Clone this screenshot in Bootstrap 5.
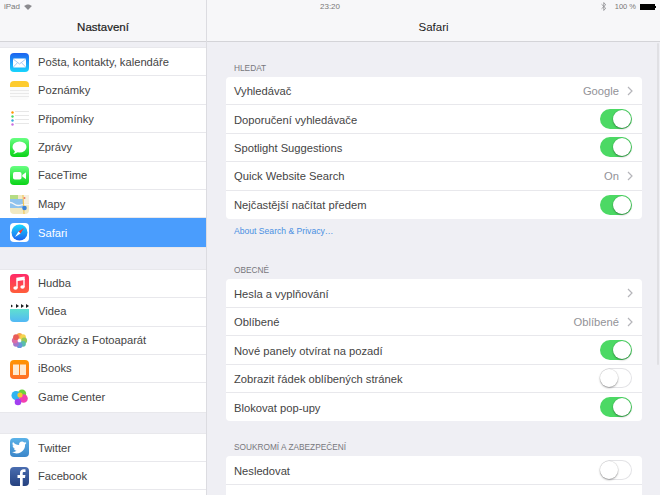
<!DOCTYPE html>
<html lang="cs">
<head>
<meta charset="utf-8">
<title>Nastavení</title>
<link href="https://cdn.jsdelivr.net/npm/bootstrap@5.3.0/dist/css/bootstrap.min.css" rel="stylesheet">
<style>
html,body{height:495px;overflow:hidden;background:#efeff4}
body{font-family:"Liberation Sans",Arial,sans-serif;font-size:11.2px;color:#333}
.shell{width:660px;height:495px;overflow:hidden}
.side{width:207px;flex:none;border-right:1px solid #dcdce1;background:#efeff4}
.head{height:42px;background:#f7f7f9;border-bottom:1px solid #d4d4d8}
.stat{height:13px;font-size:8px;color:#777;padding:0 4px;line-height:13px}
.pct{font-size:7.500px}
.ttl{height:28px;line-height:28px;text-align:center;font-size:11.5px;color:#222;padding-bottom:1px}
.ttl-b{-webkit-text-stroke:.2px #222}
.sgroup{background:#fff;border-top:1px solid #e8e8ec;border-bottom:1px solid #e8e8ec}
.sgroup.g1{margin-top:5px}
.sgroup.g2{margin-top:21px}
.sgroup.g3{margin-top:20px}
.srow{height:28.4px;padding-left:10px;gap:9px;color:#444}
.srow .lbl{flex:1;align-self:stretch;display:flex;align-items:center;border-bottom:1px solid #e8e8ec;padding-top:1px}
.g2 .srow .lbl{padding-top:0}
.g3 .srow .lbl{padding-top:2px}
.srow:last-child .lbl{border-bottom:0}
.srow.on{background:#4a9dfd;color:#fff}
.srow.on .lbl{border-bottom:0}
.ic{width:19px;height:19px;flex:none;display:block}
.main{flex:1;position:relative;min-width:0}
.pane{padding:0 18px 0 19px}
.cap{font-size:8.3px;color:#77777c;padding-left:8px;line-height:10px}
.cap1{margin-top:21px}
.cap2{margin-top:29.500px}
.cap3{margin-top:21px}
.setcard{background:#fff;border-radius:4px;margin-top:4px}
.setrow{height:28.4px;padding:0 9px 0 8px;color:#444;border-bottom:1px solid #e8e8ec}
.setrow:last-child{border-bottom:0}
.setrow>span:not(.sw){padding-top:2px}
.val{color:#929297;margin-right:8px}
.chev{width:6px;height:10px;display:block;flex:none}
.note{font-size:8.6px;color:#4a90e2;padding-left:8px;line-height:10px;margin-top:7px}
.sw{width:32px;height:20px;border-radius:10px;position:relative;display:block;flex:none;margin-right:1px}
.sw.yes{background:#4cd964}
.sw.no{background:#fff;box-shadow:inset 0 0 0 1px #e3e3e6}
.sw::after{content:"";position:absolute;top:1px;width:18px;height:18px;border-radius:50%;background:#fff;box-shadow:0 1px 2px rgba(0,0,0,.35),0 0 0 .5px rgba(0,0,0,.08)}
.sw.yes::after{right:1px}
.sw.no::after{left:0}
.scrollb{position:absolute;right:1px;top:43px;width:2px;height:322px;background:#e0e0e4;border-radius:1px}
.btd{flex:none;display:block}
.batt{flex:none;display:block;width:15px;height:6px;background:#000;position:relative;z-index:5;margin-right:1px}
.batt::after{content:"";position:absolute;left:15px;top:2px;width:1px;height:2px;background:#000}
.clockbox{width:246px;pointer-events:none}
</style>
</head>
<body>
<svg width="0" height="0" class="position-absolute">
<defs>
<linearGradient id="gmail" x1="0" y1="0" x2="0" y2="1"><stop offset="0" stop-color="#1d62f0"/><stop offset="1" stop-color="#19d5fd"/></linearGradient>
<linearGradient id="ggreen" x1="0" y1="0" x2="0" y2="1"><stop offset="0" stop-color="#67ff81"/><stop offset="1" stop-color="#0bd318"/></linearGradient>
<linearGradient id="gsaf" x1="0" y1="0" x2="0" y2="1"><stop offset="0" stop-color="#1ad6fd"/><stop offset="1" stop-color="#1d62f0"/></linearGradient>
<linearGradient id="gmus" x1="0" y1="0" x2="0" y2="1"><stop offset="0" stop-color="#ff2a68"/><stop offset="1" stop-color="#ff5e3a"/></linearGradient>
<linearGradient id="gvid" x1="0" y1="0" x2="0" y2="1"><stop offset="0" stop-color="#5fe0cf"/><stop offset="1" stop-color="#52b8f5"/></linearGradient>
<linearGradient id="gbk" x1="0" y1="0" x2="0" y2="1"><stop offset="0" stop-color="#ff9500"/><stop offset="1" stop-color="#ff6f2a"/></linearGradient>
<linearGradient id="gtw" x1="0" y1="0" x2="0" y2="1"><stop offset="0" stop-color="#5ab2e8"/><stop offset="1" stop-color="#3b86c9"/></linearGradient>
<linearGradient id="gfb" x1="0" y1="0" x2="0" y2="1"><stop offset="0" stop-color="#4a6db0"/><stop offset="1" stop-color="#25417f"/></linearGradient>
</defs>
</svg>
<div class="shell d-flex">
  <div class="side">
    <div class="head">
      <div class="stat d-flex align-items-center gap-1">iPad
        <svg width="8" height="6" viewBox="0 0 9 7"><path d="M4.5 7 0 2.400C2.600-.2 6.400-.2 9 2.400Z" fill="#8a8a8e"/></svg>
      </div>
      <div class="ttl ttl-b">Nastavení</div>
    </div>
    <div class="sgroup g1">
      <div class="srow d-flex align-items-center"><svg class="ic" viewBox="0 0 19 19"><rect width="19" height="19" rx="4" fill="url(#gmail)"/><rect x="3" y="5.500" width="13" height="9" rx="1" fill="#fff"/><path d="M3.200 6 9.500 11 15.800 6M3.400 14 7.600 9.600M15.600 14 11.400 9.600" fill="none" stroke="#7fb4ee" stroke-width=".7"/></svg><div class="lbl">Pošta, kontakty, kalendáře</div></div>
      <div class="srow d-flex align-items-center"><svg class="ic" viewBox="0 0 19 19"><rect width="19" height="19" rx="4" fill="#fbfbfb"/><path d="M0 6V4a4 4 0 0 1 4-4h11a4 4 0 0 1 4 4v2Z" fill="#fdcb2e"/><path d="M0 9.500h19M0 12.500h19M0 15.500h19" stroke="#e1e1e1" stroke-width=".7"/></svg><div class="lbl">Poznámky</div></div>
      <div class="srow d-flex align-items-center"><svg class="ic" viewBox="0 0 19 19"><rect width="19" height="19" rx="4" fill="#fff"/><path d="M5 2.500h14M5 6.500h14M5 10.500h14M5 14.500h14" stroke="#dcdcdc" stroke-width=".7"/><circle cx="2.500" cy="3.500" r="1.200" fill="#ff9500"/><circle cx="2.500" cy="7.500" r="1.200" fill="#4cd964"/><circle cx="2.500" cy="11.500" r="1.200" fill="#34aadc"/><circle cx="2.500" cy="15.500" r="1.200" fill="#c86edf"/></svg><div class="lbl">Připomínky</div></div>
      <div class="srow d-flex align-items-center"><svg class="ic" viewBox="0 0 19 19"><rect width="19" height="19" rx="4" fill="url(#ggreen)"/><ellipse cx="9.500" cy="9" rx="7" ry="5.600" fill="#fff"/><path d="M5 12.500c0 1.500-.8 2.500-1.800 3.200 1.800 0 3.300-.6 4.300-1.800Z" fill="#fff"/></svg><div class="lbl">Zprávy</div></div>
      <div class="srow d-flex align-items-center"><svg class="ic" viewBox="0 0 19 19"><rect width="19" height="19" rx="4" fill="url(#ggreen)"/><rect x="3" y="6" width="8.500" height="7.500" rx="1.800" fill="#fff"/><path d="m12.300 9 3.700-2.800v7.100L12.300 10.500Z" fill="#fff"/></svg><div class="lbl">FaceTime</div></div>
      <div class="srow d-flex align-items-center"><svg class="ic" viewBox="0 0 19 19"><rect width="19" height="19" rx="4" fill="#f1e9c2"/><path d="M0 4h13v9H0Z" fill="#8fc3ee"/><path d="M0 0h8v4H0Z" fill="#b5dc84"/><path d="M13 0h6v8h-6Z" fill="#f5f0e0"/><path d="M0 7.500c4 0 4 3 8 3s5-2 11-1" fill="none" stroke="#f7f7f7" stroke-width="1.500"/><path d="M13 0 14 19" stroke="#f3c95e" stroke-width="1.200"/><circle cx="14.500" cy="13" r="2.300" fill="#3c83d6"/><circle cx="14.500" cy="3" r="1" fill="#e87a6a"/></svg><div class="lbl">Mapy</div></div>
      <div class="srow on d-flex align-items-center"><svg class="ic" viewBox="0 0 19 19"><rect width="19" height="19" rx="4" fill="#fff"/><circle cx="9.500" cy="9.500" r="8" fill="url(#gsaf)"/><path d="M14 5 8.500 8.500 10.500 10.500Z" fill="#ff3b30"/><path d="M5 14 8.500 8.500 10.500 10.500Z" fill="#fff"/></svg><div class="lbl">Safari</div></div>
    </div>
    <div class="sgroup g2">
      <div class="srow d-flex align-items-center"><svg class="ic" viewBox="0 0 19 19"><rect width="19" height="19" rx="4" fill="url(#gmus)"/><path d="M7 6.500V14M14 5v8" fill="none" stroke="#fff" stroke-width="1.400"/><path d="M6.300 3.800 14.700 2.500V6L6.300 7.300Z" fill="#fff"/><ellipse cx="5.500" cy="14" rx="2.200" ry="1.800" fill="#fff"/><ellipse cx="12.500" cy="13" rx="2.200" ry="1.800" fill="#fff"/></svg><div class="lbl">Hudba</div></div>
      <div class="srow d-flex align-items-center"><svg class="ic" viewBox="0 0 19 19"><path d="M0 6h19v9a4 4 0 0 1-4 4H4a4 4 0 0 1-4-4Z" fill="url(#gvid)"/><path d="M0 1h19v4H0Z" fill="#fff"/><path d="m1 1.500 2 1.500-2 1.500ZM6 1l3 2-3 2ZM11 1l3 2-3 2ZM16 1l3 2-3 2Z" fill="#1c1c1e"/></svg><div class="lbl">Videa</div></div>
      <div class="srow d-flex align-items-center"><svg class="ic" viewBox="0 0 19 19"><rect width="19" height="19" rx="4" fill="#fff"/><g opacity=".92"><circle cx="9.500" cy="4.800" r="2.900" fill="#f9a03f"/><circle cx="13" cy="6.200" r="2.900" fill="#f4d03f"/><circle cx="14.200" cy="9.500" r="2.900" fill="#8bc34a"/><circle cx="13" cy="12.800" r="2.900" fill="#4cb8a4"/><circle cx="9.500" cy="14.200" r="2.900" fill="#5a8fd8"/><circle cx="6" cy="12.800" r="2.900" fill="#9b6cc8"/><circle cx="4.800" cy="9.500" r="2.900" fill="#d9609f"/><circle cx="6" cy="6.200" r="2.900" fill="#e8504c"/></g></svg><div class="lbl">Obrázky a Fotoaparát</div></div>
      <div class="srow d-flex align-items-center"><svg class="ic" viewBox="0 0 19 19"><rect width="19" height="19" rx="4" fill="url(#gbk)"/><path d="M3 4.500h6V15H3ZM10 4.500h6V15h-6Z" fill="#ffe9cf"/></svg><div class="lbl">iBooks</div></div>
      <div class="srow d-flex align-items-center"><svg class="ic" viewBox="0 0 19 19"><rect width="19" height="19" rx="4" fill="#fff"/><circle cx="12" cy="5.800" r="4.200" fill="#6fd23c"/><circle cx="6" cy="7.500" r="4.500" fill="#2fb4f0"/><circle cx="13.500" cy="10.500" r="4.300" fill="#f23fb0"/><circle cx="8" cy="14" r="3.300" fill="#a23ff0"/><circle cx="10" cy="7" r="2.600" fill="#f8c72f"/></svg><div class="lbl">Game Center</div></div>
    </div>
    <div class="sgroup g3">
      <div class="srow d-flex align-items-center"><svg class="ic" viewBox="0 0 19 19"><rect width="19" height="19" rx="4" fill="url(#gtw)"/><path d="M16.500 4.800c-.5.300-1.100.4-1.700.5.600-.4 1.100-.9 1.300-1.600-.6.300-1.200.6-1.900.7a3 3 0 0 0-5.100 2.700C6.700 7 4.500 5.800 3 4a3 3 0 0 0 .9 4c-.5 0-1-.2-1.300-.4 0 1.500 1 2.700 2.400 3-.4.100-.9.100-1.300 0 .4 1.200 1.500 2 2.800 2.100A6 6 0 0 1 2 14a8.500 8.500 0 0 0 13.100-7.500c.5-.4 1-.9 1.400-1.700Z" fill="#fff"/></svg><div class="lbl">Twitter</div></div>
      <div class="srow d-flex align-items-center"><svg class="ic" viewBox="0 0 19 19"><rect width="19" height="19" rx="4" fill="url(#gfb)"/><path d="M10 19v-8H7.500V8H10V6c0-2.500 1.500-3.700 3.600-3.700.9 0 1.700.1 1.900.1v2.600h-1.400c-1.100 0-1.400.5-1.400 1.300V8h2.700l-.4 3H12.700v8Z" fill="#fff"/></svg><div class="lbl">Facebook</div></div>
      <div class="srow d-flex align-items-center"><svg class="ic" viewBox="0 0 19 19"><rect width="19" height="19" rx="4" fill="#fff"/></svg><div class="lbl"></div></div>
    </div>
  </div>
  <div class="main">
    <div class="head position-relative">
      <div class="stat d-flex align-items-center justify-content-end gap-1">
        <svg class="btd" width="6" height="9" viewBox="0 0 5 8"><path d="M.3 2 4 5.500 2.300 7.500V.5L4 2.500.3 6" fill="none" stroke="#8a8a8e" stroke-width=".7"/></svg>
        <span class="pct ms-1">100 %</span>
        <span class="batt"></span>
      </div>
      <div class="ttl">Safari</div>
      <div class="stat clockbox position-absolute top-0 start-0 text-center">23:20</div>
    </div>
    <div class="scrollb"></div>
    <div class="pane">
      <div class="cap cap1">HLEDAT</div>
      <div class="setcard">
        <div class="setrow d-flex align-items-center"><span class="flex-grow-1">Vyhledávač</span><span class="val">Google</span><svg class="chev" viewBox="0 0 6 10"><path d="m1 1 4 4-4 4" fill="none" stroke="#b5b5ba" stroke-width="1.200"/></svg></div>
        <div class="setrow d-flex align-items-center"><span class="flex-grow-1">Doporučení vyhledávače</span><span class="sw yes"></span></div>
        <div class="setrow d-flex align-items-center"><span class="flex-grow-1">Spotlight Suggestions</span><span class="sw yes"></span></div>
        <div class="setrow d-flex align-items-center"><span class="flex-grow-1">Quick Website Search</span><span class="val">On</span><svg class="chev" viewBox="0 0 6 10"><path d="m1 1 4 4-4 4" fill="none" stroke="#b5b5ba" stroke-width="1.200"/></svg></div>
        <div class="setrow d-flex align-items-center"><span class="flex-grow-1">Nejčastější načítat předem</span><span class="sw yes"></span></div>
      </div>
      <div class="note">About Search &amp; Privacy…</div>
      <div class="cap cap2">OBECNÉ</div>
      <div class="setcard">
        <div class="setrow d-flex align-items-center"><span class="flex-grow-1">Hesla a vyplňování</span><svg class="chev" viewBox="0 0 6 10"><path d="m1 1 4 4-4 4" fill="none" stroke="#b5b5ba" stroke-width="1.200"/></svg></div>
        <div class="setrow d-flex align-items-center"><span class="flex-grow-1">Oblíbené</span><span class="val">Oblíbené</span><svg class="chev" viewBox="0 0 6 10"><path d="m1 1 4 4-4 4" fill="none" stroke="#b5b5ba" stroke-width="1.200"/></svg></div>
        <div class="setrow d-flex align-items-center"><span class="flex-grow-1">Nové panely otvírat na pozadí</span><span class="sw yes"></span></div>
        <div class="setrow d-flex align-items-center"><span class="flex-grow-1">Zobrazit řádek oblíbených stránek</span><span class="sw no"></span></div>
        <div class="setrow d-flex align-items-center"><span class="flex-grow-1">Blokovat pop-upy</span><span class="sw yes"></span></div>
      </div>
      <div class="cap cap3">SOUKROMÍ A ZABEZPEČENÍ</div>
      <div class="setcard">
        <div class="setrow d-flex align-items-center"><span class="flex-grow-1">Nesledovat</span><span class="sw no"></span></div>
        <div class="setrow"></div>
      </div>
    </div>
  </div>
</div>
</body>
</html>
